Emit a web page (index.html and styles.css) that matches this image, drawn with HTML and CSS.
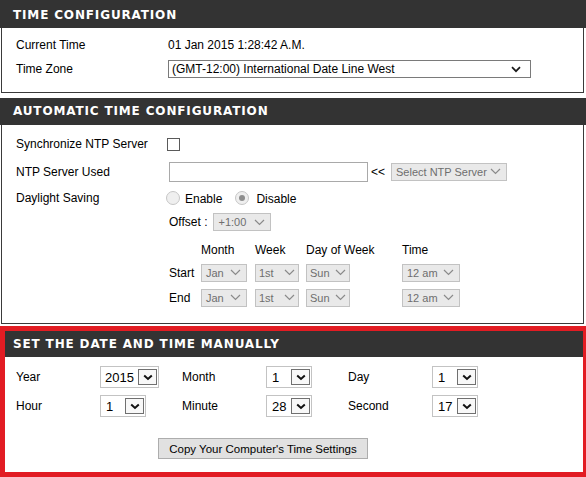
FILE: index.html
```html
<!DOCTYPE html>
<html>
<head>
<meta charset="utf-8">
<link rel="stylesheet" href="styles.css">
</head>
<body>
<div class="sec sec1">
  <div class="hdr">TIME CONFIGURATION</div>
  <div class="body">
    <div class="row r1"><div class="lbl">Current Time</div><div>01 Jan 2015 1:28:42 A.M.</div></div>
    <div class="row r2"><div class="lbl">Time Zone</div>
      <div class="tzsel"><span>(GMT-12:00) International Date Line West</span>
        <svg width="10" height="7" viewBox="0 0 10 7"><path d="M1 1.2 L5 5.2 L9 1.2" stroke="#1a1a1a" stroke-width="1.7" fill="none"/></svg>
      </div>
    </div>
  </div>
</div>

<div class="sec sec2">
  <div class="hdr">AUTOMATIC TIME CONFIGURATION</div>
  <div class="body">
    <div class="row r-sync"><div class="lbl">Synchronize NTP Server</div><span class="cb"></span></div>
    <div class="row r-ntp"><div class="lbl">NTP Server Used</div>
      <span class="inp"></span><span class="ll">&lt;&lt;</span>
      <span class="dsel w-ntp"><span>Select NTP Server</span><svg width="11" height="7" viewBox="0 0 11 7"><path d="M1 1 L5.5 5.5 L10 1" stroke="#8a8a8a" stroke-width="1.2" fill="none"/></svg></span>
    </div>
    <div class="row r-dst"><div class="lbl">Daylight Saving</div>
      <span class="radio"></span><span class="rtxt">Enable</span>
      <span class="radio on r-dis"><span class="dot"></span></span><span class="rtxt rt2">Disable</span>
    </div>
    <div class="row r-off"><div class="lbl"></div>
      <span class="offtxt">Offset :</span>
      <span class="dsel w-off"><span>+1:00</span><svg width="11" height="7" viewBox="0 0 11 7"><path d="M1 1 L5.5 5.5 L10 1" stroke="#8a8a8a" stroke-width="1.2" fill="none"/></svg></span>
    </div>
    <div class="row r-tbl"><div class="lbl"></div>
      <div class="dgrid">
        <div class="th"></div><div class="th">Month</div><div class="th">Week</div><div class="th">Day of Week</div><div class="th">Time</div>
        <div class="td">Start</div>
        <div class="td"><span class="dsel w-mon"><span>Jan</span><svg width="11" height="7" viewBox="0 0 11 7"><path d="M1 1 L5.5 5.5 L10 1" stroke="#8a8a8a" stroke-width="1.2" fill="none"/></svg></span></div>
        <div class="td"><span class="dsel w-wk"><span>1st</span><svg width="11" height="7" viewBox="0 0 11 7"><path d="M1 1 L5.5 5.5 L10 1" stroke="#8a8a8a" stroke-width="1.2" fill="none"/></svg></span></div>
        <div class="td"><span class="dsel w-wk"><span>Sun</span><svg width="11" height="7" viewBox="0 0 11 7"><path d="M1 1 L5.5 5.5 L10 1" stroke="#8a8a8a" stroke-width="1.2" fill="none"/></svg></span></div>
        <div class="td"><span class="dsel w-tm"><span>12 am</span><svg width="11" height="7" viewBox="0 0 11 7"><path d="M1 1 L5.5 5.5 L10 1" stroke="#8a8a8a" stroke-width="1.2" fill="none"/></svg></span></div>
        <div class="td">End</div>
        <div class="td"><span class="dsel w-mon"><span>Jan</span><svg width="11" height="7" viewBox="0 0 11 7"><path d="M1 1 L5.5 5.5 L10 1" stroke="#8a8a8a" stroke-width="1.2" fill="none"/></svg></span></div>
        <div class="td"><span class="dsel w-wk"><span>1st</span><svg width="11" height="7" viewBox="0 0 11 7"><path d="M1 1 L5.5 5.5 L10 1" stroke="#8a8a8a" stroke-width="1.2" fill="none"/></svg></span></div>
        <div class="td"><span class="dsel w-wk"><span>Sun</span><svg width="11" height="7" viewBox="0 0 11 7"><path d="M1 1 L5.5 5.5 L10 1" stroke="#8a8a8a" stroke-width="1.2" fill="none"/></svg></span></div>
        <div class="td"><span class="dsel w-tm"><span>12 am</span><svg width="11" height="7" viewBox="0 0 11 7"><path d="M1 1 L5.5 5.5 L10 1" stroke="#8a8a8a" stroke-width="1.2" fill="none"/></svg></span></div>
      </div>
    </div>
  </div>
</div>

<div class="sec3">
  <div class="hdr">SET THE DATE AND TIME MANUALLY</div>
  <div class="mbody">
    <div class="mgrid">
      <div>Year</div>
      <div><span class="msel w-year"><span>2015</span><span class="btn"><svg width="10" height="7" viewBox="0 0 10 7"><path d="M1.2 1.5 L5 5 L8.8 1.5" stroke="#111" stroke-width="2" fill="none"/></svg></span></span></div>
      <div>Month</div>
      <div><span class="msel"><span>1</span><span class="btn"><svg width="10" height="7" viewBox="0 0 10 7"><path d="M1.2 1.5 L5 5 L8.8 1.5" stroke="#111" stroke-width="2" fill="none"/></svg></span></span></div>
      <div>Day</div>
      <div><span class="msel"><span>1</span><span class="btn"><svg width="10" height="7" viewBox="0 0 10 7"><path d="M1.2 1.5 L5 5 L8.8 1.5" stroke="#111" stroke-width="2" fill="none"/></svg></span></span></div>
      <div>Hour</div>
      <div><span class="msel"><span>1</span><span class="btn"><svg width="10" height="7" viewBox="0 0 10 7"><path d="M1.2 1.5 L5 5 L8.8 1.5" stroke="#111" stroke-width="2" fill="none"/></svg></span></span></div>
      <div>Minute</div>
      <div><span class="msel"><span>28</span><span class="btn"><svg width="10" height="7" viewBox="0 0 10 7"><path d="M1.2 1.5 L5 5 L8.8 1.5" stroke="#111" stroke-width="2" fill="none"/></svg></span></span></div>
      <div>Second</div>
      <div><span class="msel"><span>17</span><span class="btn"><svg width="10" height="7" viewBox="0 0 10 7"><path d="M1.2 1.5 L5 5 L8.8 1.5" stroke="#111" stroke-width="2" fill="none"/></svg></span></span></div>
    </div>
    <div class="btnrow"><span class="copy">Copy Your Computer's Time Settings</span></div>
  </div>
</div>
</body>
</html>
```

FILE: styles.css
```css
* { box-sizing: border-box; }
html, body { margin: 0; padding: 0; }
body {
  width: 586px;
  height: 477px;
  overflow: hidden;
  background: #fff;
  color: #000;
  font-family: "Liberation Sans", Arial, sans-serif;
  font-size: 12px;
}
svg { flex: none; display: block; }
.hdr {
  background: #333;
  color: #fff;
  font-family: "DejaVu Sans", Verdana, sans-serif;
  font-weight: bold;
  font-size: 12px;
  letter-spacing: 0.85px;
  height: 27px;
  line-height: 27px;
  padding-left: 13px;
  white-space: nowrap;
}
.sec1 .hdr { height: 28px; line-height: 31px; }
.body {
  margin: 0 2px 0 1px;
  border: 1px solid #3a3a3a;
  border-top: none;
  padding-left: 14px;
}
.row { display: flex; align-items: center; white-space: nowrap; }
.lbl { width: 152px; flex: none; }

.sec1 .body { padding-top: 7px; padding-bottom: 14px; }
.r1 { height: 20px; }
.r2 { height: 18px; margin-top: 5px; }
.tzsel {
  width: 363px;
  height: 18px;
  border: 1px solid #7a7a7a;
  background: #fff;
  display: flex;
  align-items: center;
  justify-content: space-between;
  padding: 0 9px 0 3px;
}

.sec2 { margin-top: 5px; }
.sec2 .body { padding-top: 5px; padding-bottom: 13px; }
.r-sync { height: 28px; }
.r-ntp { height: 27px; }
.r-dst { height: 26px; }
.r-off { height: 22px; }
.r-tbl { margin-top: 7px; align-items: flex-start; }

.cb {
  width: 13px;
  height: 13px;
  border: 1px solid #5a5a5a;
  background: #fff;
  margin-left: -1px;
}
.inp {
  width: 199px;
  height: 20px;
  border: 1px solid #a9a9a9;
  background: #fff;
  margin-left: 1px;
}
.ll { margin-left: 3px; }
.dsel {
  display: inline-flex;
  align-items: center;
  justify-content: space-between;
  height: 18px;
  border: 1px solid #c2c2c2;
  background: #e9e9e9;
  color: #6e6e6e;
  font-size: 11px;
  padding: 0 5px 0 4px;
  white-space: nowrap;
}
.w-ntp { width: 116px; margin-left: 6px; }
.w-off { width: 58px; margin-left: 6px; }
.w-mon { width: 46px; }
.w-wk { width: 44px; padding: 0 3px 0 3px; }
.w-tm { width: 58px; }

.radio {
  width: 14px;
  height: 14px;
  border-radius: 50%;
  border: 1px solid #c6c6c6;
  background: #efefef;
  margin-left: -2px;
  display: inline-flex;
  align-items: center;
  justify-content: center;
}
.r-dis { margin-left: 13px; }
.dot { width: 6px; height: 6px; border-radius: 50%; background: #8e8e8e; }
.rtxt { margin-left: 5px; position: relative; top: 1px; }
.rt2 { margin-left: 7px; }
.offtxt { margin-left: 1px; }

.dgrid {
  margin-left: 1px;
  display: grid;
  grid-template-columns: 32px 54px 51px 96px auto;
  grid-template-rows: 20px 25px 25px;
  align-items: center;
}

.sec3 {
  margin-top: 2px;
  border: 5px solid #e21c23;
  border-right-width: 3px;
}
.sec3 .hdr { height: 26px; line-height: 26px; padding-left: 8px; }
.mbody { padding: 9px 0 13px 11px; }
.mgrid {
  display: grid;
  grid-template-columns: 84px 82px 84px 82px 84px 1fr;
  grid-template-rows: 22px 22px;
  row-gap: 7px;
  align-items: center;
}
.msel {
  display: inline-flex;
  align-items: center;
  justify-content: space-between;
  width: 46px;
  height: 22px;
  border: 1px solid #c3c3c3;
  background: #fff;
  padding: 0 1px 0 5px;
  font-size: 13px;
}
.msel.w-year { width: 59px; padding-left: 4px; }
.btn {
  width: 19px;
  height: 16px;
  border: 1px solid #707070;
  background: #f8f8f8;
  display: inline-flex;
  align-items: center;
  justify-content: center;
}
.btnrow { margin-top: 21px; padding-left: 142px; }
.copy {
  display: inline-flex;
  align-items: center;
  justify-content: center;
  width: 210px;
  height: 21px;
  border: 1px solid #adadad;
  background: #e1e1e1;
  font-size: 11.5px;
}
```
